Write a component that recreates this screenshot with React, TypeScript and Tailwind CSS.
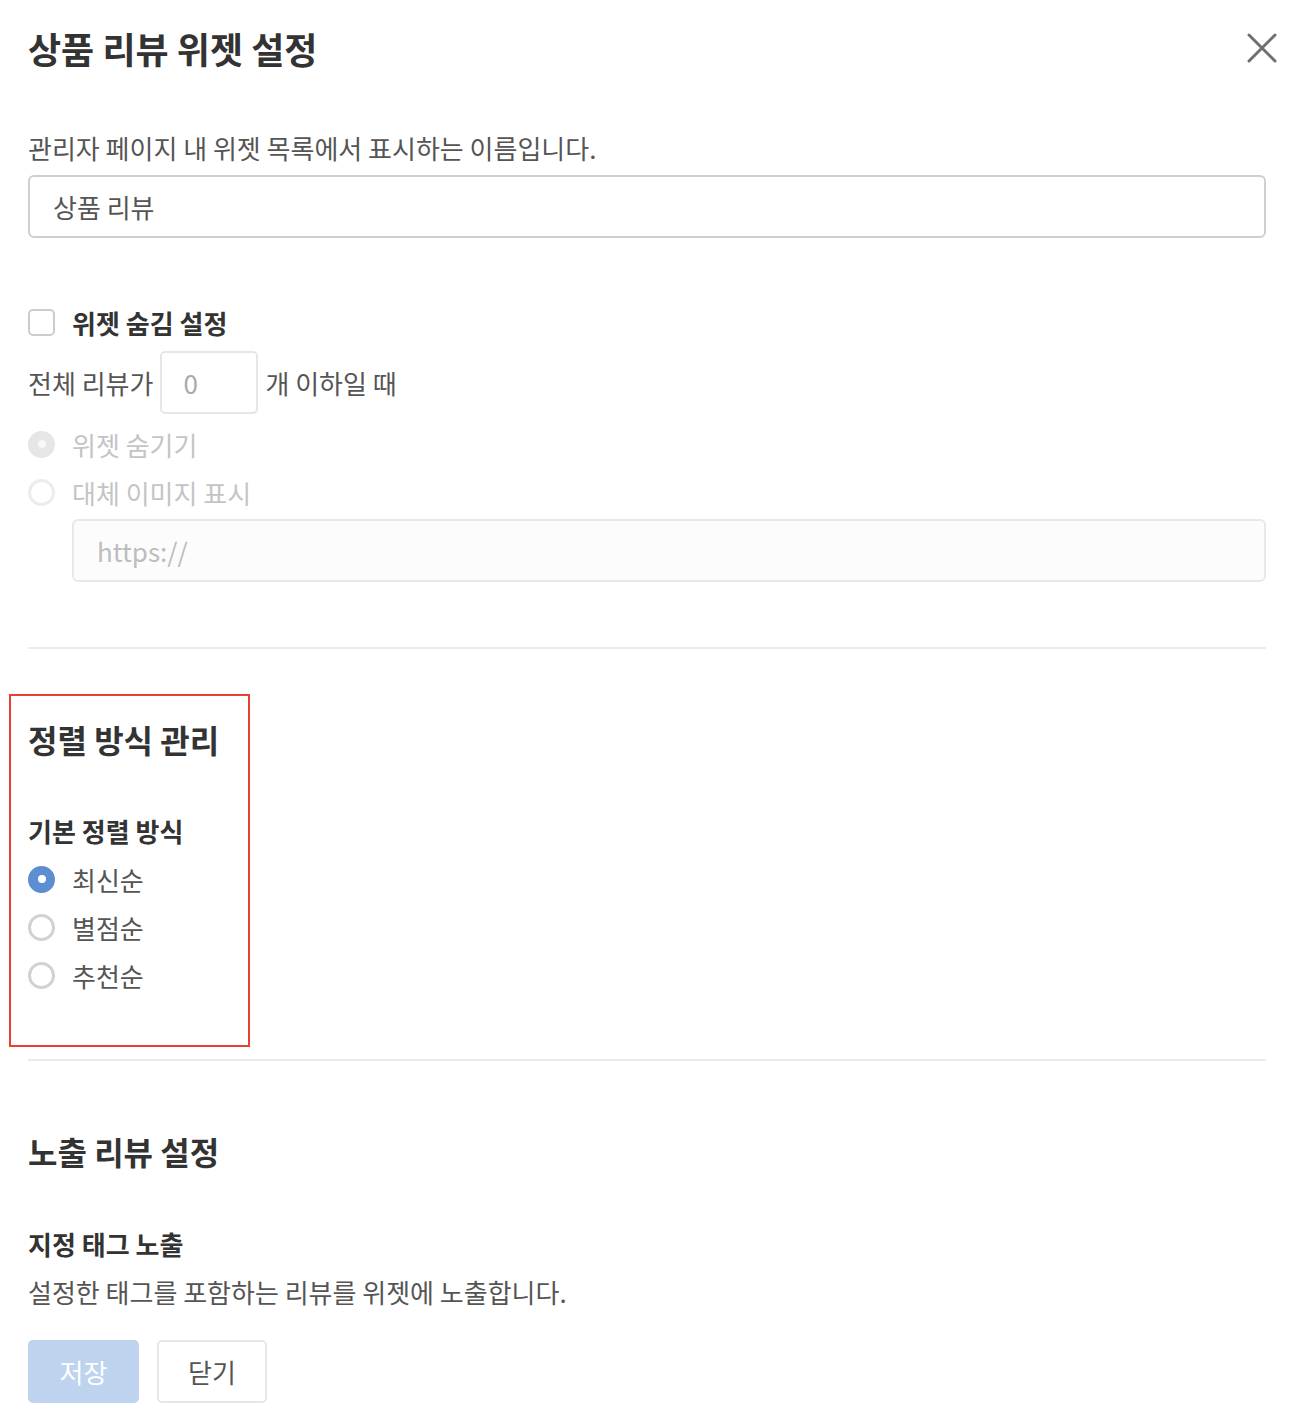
import React from "react";

const font = { fontFamily: '"Noto Sans CJK KR", "Noto Sans", sans-serif' };

const Radio: React.FC<{ checked?: boolean; disabled?: boolean; label: string }> = ({ checked, disabled, label }) => {
  let circle = "border-[3px] border-[#d2d2d2] bg-white";
  if (disabled) circle = "border-[3px] border-[#ececec] bg-white";
  if (checked && !disabled) circle = "bg-[#5b8fd1] border-[3px] border-[#5b8fd1]";
  if (checked && disabled) circle = "bg-[#e6e6e6] border-[3px] border-[#e6e6e6]";
  return (
    <label className="flex items-center h-[36px] mt-[12px]">
      <span className={`w-[27px] h-[27px] rounded-full flex items-center justify-center ${circle}`}>
        {checked && <span className={`w-[8px] h-[8px] rounded-full ${disabled ? "bg-[#f8f8f8]" : "bg-white"}`} />}
      </span>
      <span className={`ml-[17px] text-[26px] ${disabled ? "text-[#c4c4c4]" : "text-[#555]"}`}>{label}</span>
    </label>
  );
};

const App: React.FC = () => {
  return (
    <div className="bg-white min-h-[1414px] pl-[28px] pr-[42px] pt-[24px] text-[#555]" style={font}>
      <div className="flex items-center justify-between h-[48px]">
        <h1 className="text-[36px] font-bold text-[#333] leading-[48px]">상품 리뷰 위젯 설정</h1>
        <button className="w-[40px] h-[40px] flex items-center justify-center -mr-[16px]">
          <svg width="30" height="30" viewBox="0 0 30 30" fill="none" stroke="#6f6f6f" strokeWidth="3" strokeLinecap="round">
            <path d="M2 2 L28 28 M28 2 L2 28" />
          </svg>
        </button>
      </div>

      <p className="mt-[58px] text-[26px] leading-[36px]">관리자 페이지 내 위젯 목록에서 표시하는 이름입니다.</p>
      <div className="mt-[9px] h-[63px] border-2 border-[#cfcfcf] rounded-[6px] flex items-center px-[23px] text-[26px] text-[#555]">
        상품 리뷰
      </div>

      <label className="mt-[66px] flex items-center h-[36px]">
        <span className="w-[27px] h-[27px] border-2 border-[#cccccc] rounded-[5px] bg-white" />
        <span className="ml-[17px] text-[26px] font-bold text-[#333]">위젯 숨김 설정</span>
      </label>

      <div className="mt-[11px] flex items-center h-[63px] text-[26px]">
        <span>전체 리뷰가</span>
        <div className="ml-[7px] w-[98px] h-[63px] border-2 border-[#e6e6e6] rounded-[5px] flex items-center px-[21px] text-[#aaa]">0</div>
        <span className="ml-[7px]">개 이하일 때</span>
      </div>

      <Radio checked disabled label="위젯 숨기기" />
      <Radio disabled label="대체 이미지 표시" />
      <div className="mt-[9px] ml-[44px] h-[63px] border-2 border-[#e8e8e8] bg-[#fcfcfc] rounded-[6px] flex items-center px-[23px] text-[26px] text-[#bdbdbd]">
        https://
      </div>

      <div className="mt-[65px] h-[2px] bg-[#ebebeb]" />

      <div className="mt-[45px] -ml-[19px] w-[241px] border-2 border-[#e5432f] pl-[17px] pt-[23px] pb-[52px]">
        <h2 className="text-[32px] font-bold text-[#333] leading-[40px] whitespace-nowrap">정렬 방식 관리</h2>
        <h3 className="mt-[54px] text-[26px] font-bold text-[#333] leading-[36px]">기본 정렬 방식</h3>
        <Radio checked label="최신순" />
        <Radio label="별점순" />
        <Radio label="추천순" />
      </div>

      <div className="mt-[12px] h-[2px] bg-[#ebebeb]" />

      <h2 className="mt-[70px] text-[32px] font-bold text-[#333] leading-[40px]">노출 리뷰 설정</h2>
      <h3 className="mt-[55px] text-[26px] font-bold text-[#333] leading-[36px]">지정 태그 노출</h3>
      <p className="mt-[12px] text-[26px] leading-[36px]">설정한 태그를 포함하는 리뷰를 위젯에 노출합니다.</p>

      <div className="mt-[30px] flex gap-[18px]">
        <button className="w-[111px] h-[63px] rounded-[5px] bg-[#bdd3ee] text-white text-[26px]">저장</button>
        <button className="w-[110px] h-[63px] rounded-[5px] border-2 border-[#e6e6e6] bg-white text-[#555] text-[26px]">닫기</button>
      </div>
    </div>
  );
};

export default App;
